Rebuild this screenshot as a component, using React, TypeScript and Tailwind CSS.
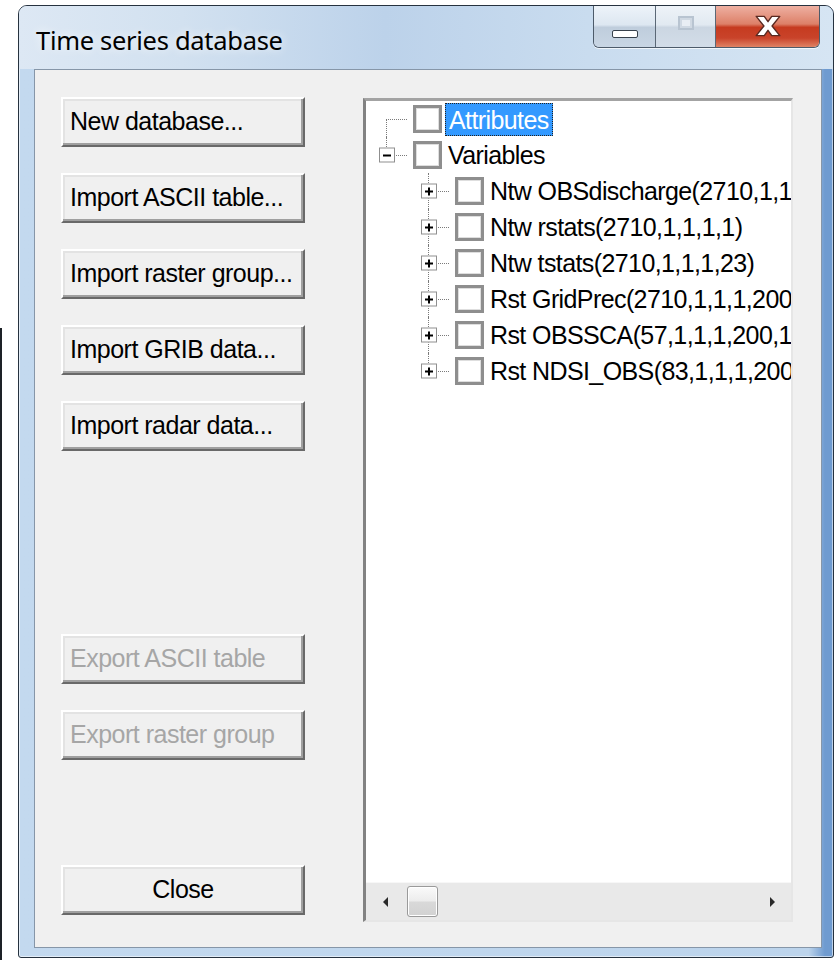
import clsx from 'clsx';

const sans = "font-['Liberation_Sans',Arial,sans-serif]";

type Node = {
    label: string;
    level: 0 | 1;
    expander?: 'plus' | 'minus';
    up?: boolean;
    down?: boolean;
    selected?: boolean;
};

// long names are clipped by the tree view, same as the native control
const nodes: Node[] = [
    { label: 'Attributes', level: 0, down: true, selected: true },
    { label: 'Variables', level: 0, expander: 'minus', up: true },
    { label: 'Ntw OBSdischarge(2710,1,1', level: 1, expander: 'plus', up: true, down: true },
    { label: 'Ntw rstats(2710,1,1,1,1)', level: 1, expander: 'plus', up: true, down: true },
    { label: 'Ntw tstats(2710,1,1,1,23)', level: 1, expander: 'plus', up: true, down: true },
    { label: 'Rst GridPrec(2710,1,1,1,200', level: 1, expander: 'plus', up: true, down: true },
    { label: 'Rst OBSSCA(57,1,1,1,200,1', level: 1, expander: 'plus', up: true, down: true },
    { label: 'Rst NDSI_OBS(83,1,1,1,200', level: 1, expander: 'plus', up: true },
];

function DialogButton({
    label,
    disabled = false,
    centered = false,
    className,
}: {
    label: string;
    disabled?: boolean;
    centered?: boolean;
    className?: string;
}) {
    return (
        <button
            type="button"
            disabled={disabled}
            className={clsx(
                'flex h-[50px] w-[244px] shrink-0 items-center whitespace-nowrap border-2 border-t-white border-l-white border-r-[#696969] border-b-[#696969] bg-[#f0f0f0] text-[25px] tracking-[-0.5px]',
                'shadow-[inset_-2px_-2px_0_#a0a0a0,inset_2px_2px_0_#e3e3e3]',
                centered ? 'justify-center' : 'pl-[7px]',
                disabled ? 'text-[#a6a6a6]' : 'text-black',
                className
            )}
        >
            {label}
        </button>
    );
}

function Expander({ kind }: { kind: 'plus' | 'minus' }) {
    return (
        <div className="absolute left-[13px] top-1/2 flex h-[15px] w-[16px] -translate-y-1/2 items-center justify-center border border-[#8f8f8f] bg-white">
            <div className="absolute h-[2px] w-[8px] bg-black" />
            {kind === 'plus' && <div className="absolute h-[8px] w-[2px] bg-black" />}
        </div>
    );
}

function TreeRow({ node }: { node: Node }) {
    return (
        <div className={clsx('flex h-[36px] items-center whitespace-nowrap', node.level === 1 && 'pl-[42px]')}>
            {/* connector lines + expander box */}
            <div className="relative h-full w-[43px] shrink-0">
                {node.up && <div className="absolute left-[20px] top-0 h-1/2 border-l border-dotted border-[#7a7a7a]" />}
                {node.down && <div className="absolute bottom-0 left-[20px] top-1/2 border-l border-dotted border-[#7a7a7a]" />}
                <div className="absolute left-[20px] right-[2px] top-1/2 border-t border-dotted border-[#7a7a7a]" />
                {node.expander && <Expander kind={node.expander} />}
            </div>
            <div className="ml-[4px] h-[28px] w-[29px] shrink-0 border-[3px] border-[#8e8e8e] bg-white shadow-[inset_0_0_0_1px_#dedede]" />
            <span
                className={clsx(
                    'ml-[3px] h-[33px] px-[3px] text-[25px] leading-[33px] tracking-[-0.6px]',
                    node.selected ? 'border border-dotted border-[#222] bg-[#3399ff] text-white' : 'text-black'
                )}
            >
                {node.label}
            </span>
        </div>
    );
}

function HScrollBar() {
    return (
        <div className="flex h-[38px] shrink-0 items-center border-t border-[#f7f7f7] bg-[#e9e9e9]">
            <div className="flex h-full w-[38px] items-center justify-center">
                <div className="h-0 w-0 border-y-[5px] border-r-[5px] border-y-transparent border-r-[#2a2a2a]" />
            </div>
            <div className="ml-[3px] h-[31px] w-[31px] rounded-[3px] border border-[#9a9a9a] bg-[linear-gradient(180deg,#fafafa_0%,#ececec_48%,#d9d9d9_52%,#d2d2d2_100%)] shadow-[inset_0_0_0_1px_#ffffff]" />
            <div className="flex-1" />
            <div className="flex h-full w-[38px] items-center justify-center">
                <div className="h-0 w-0 border-y-[5px] border-l-[5px] border-y-transparent border-l-[#2a2a2a]" />
            </div>
        </div>
    );
}

function CaptionButtons() {
    return (
        <div className="mr-[13px] ml-auto flex h-[42px] overflow-hidden rounded-b-[6px] border border-t-0 border-[#4d5b6a] shadow-[0_1px_0_rgba(255,255,255,0.7)]">
            <div className="flex w-[62px] items-end justify-center border-r border-[#5b6876] bg-[linear-gradient(180deg,#edf3f9_0%,#dde7f1_46%,#bfcddc_52%,#c9d6e4_100%)] pb-[9px]">
                <div className="h-[8px] w-[26px] rounded-[2px] border border-[#37414c] bg-white" />
            </div>
            <div className="flex w-[60px] items-center justify-center border-r border-[#5b6876] bg-[linear-gradient(180deg,#eef3f8_0%,#e1e9f1_46%,#cbd6e2_52%,#d3dde8_100%)] pb-[8px]">
                <div className="h-[14px] w-[16px] border-2 border-[#b8c4d1] bg-[#e9eef4] shadow-[inset_0_0_0_2px_#d0d9e3]" />
            </div>
            <div className="flex w-[103px] items-center justify-center bg-[linear-gradient(180deg,#eeb0a2_0%,#dd8068_44%,#c63b20_52%,#c9432a_78%,#e08365_100%)] pb-[2px]">
                <svg width="30" height="24" viewBox="0 0 28 22">
                    <path
                        d="M3 2 L10.5 2 L14 7 L17.5 2 L25 2 L17.8 11 L25 20 L17.5 20 L14 15 L10.5 20 L3 20 L10.2 11 Z"
                        fill="#ffffff"
                        stroke="#5a2a22"
                        strokeWidth="1.3"
                        strokeLinejoin="round"
                    />
                </svg>
            </div>
        </div>
    );
}

export default function App() {
    return (
        <div className={clsx('flex h-[960px] w-[836px] overflow-hidden bg-white', sans)}>
            {/* edge of the window behind */}
            <div className="w-[18px] shrink-0 pt-[328px]">
                <div className="h-full w-[2px] bg-[#1d2127]" />
            </div>

            {/* Aero frame */}
            <div className="mt-[5px] flex h-[953px] w-[816px] shrink-0 flex-col rounded-t-[9px] rounded-b-[3px] border border-[#26323f] bg-[linear-gradient(90deg,#c3d9ef_0%,#bcd4ec_97%,#6f9bd0_99%),linear-gradient(180deg,#d4e3f2_0%,#c0d7ee_100%)] shadow-[inset_0_0_0_1px_rgba(255,255,255,0.55)]">
                {/* title bar */}
                <div className="flex h-[63px] shrink-0 rounded-t-[8px] bg-[linear-gradient(90deg,#dde8f4_0%,#d2e1f0_20%,#bcd2ea_45%,#c9dcef_70%,#d6e5f3_100%)]">
                    <div className="pl-[17px] pt-[18px] font-['Noto_Sans','Open_Sans',sans-serif] text-[25.5px] leading-[32px] tracking-[-0.3px] text-black [text-shadow:0_0_10px_rgba(255,255,255,0.95)]">
                        Time series database
                    </div>
                    <CaptionButtons />
                </div>

                {/* client area */}
                <div className="mb-[9px] ml-[15px] mr-[11px] flex flex-1 items-start border border-[#8696a8] bg-[#f0f0f0] pl-[26px] pr-[28px] pt-[27px]">
                    <div className="flex h-[818px] w-[244px] shrink-0 flex-col">
                        <div className="flex flex-col gap-[26px]">
                            <DialogButton label="New database..." />
                            <DialogButton label="Import ASCII table..." />
                            <DialogButton label="Import raster group..." />
                            <DialogButton label="Import GRIB data..." />
                            <DialogButton label="Import radar data..." />
                        </div>
                        <div className="mt-[183px] flex flex-col gap-[26px]">
                            <DialogButton label="Export ASCII table" disabled />
                            <DialogButton label="Export raster group" disabled />
                        </div>
                        <DialogButton label="Close" centered className="mt-auto" />
                    </div>

                    <div className="ml-[58px] mt-[1px] flex h-[824px] w-[430px] shrink-0 flex-col border-b-2 border-l-[3px] border-r-2 border-t-[3px] border-b-[#e6e6e6] border-l-[#828282] border-r-[#e6e6e6] border-t-[#a3a3a3] bg-white">
                        <div className="flex-1 overflow-hidden">
                            {nodes.map((n) => (
                                <TreeRow key={n.label} node={n} />
                            ))}
                        </div>
                        <HScrollBar />
                    </div>
                </div>
            </div>
        </div>
    );
}
